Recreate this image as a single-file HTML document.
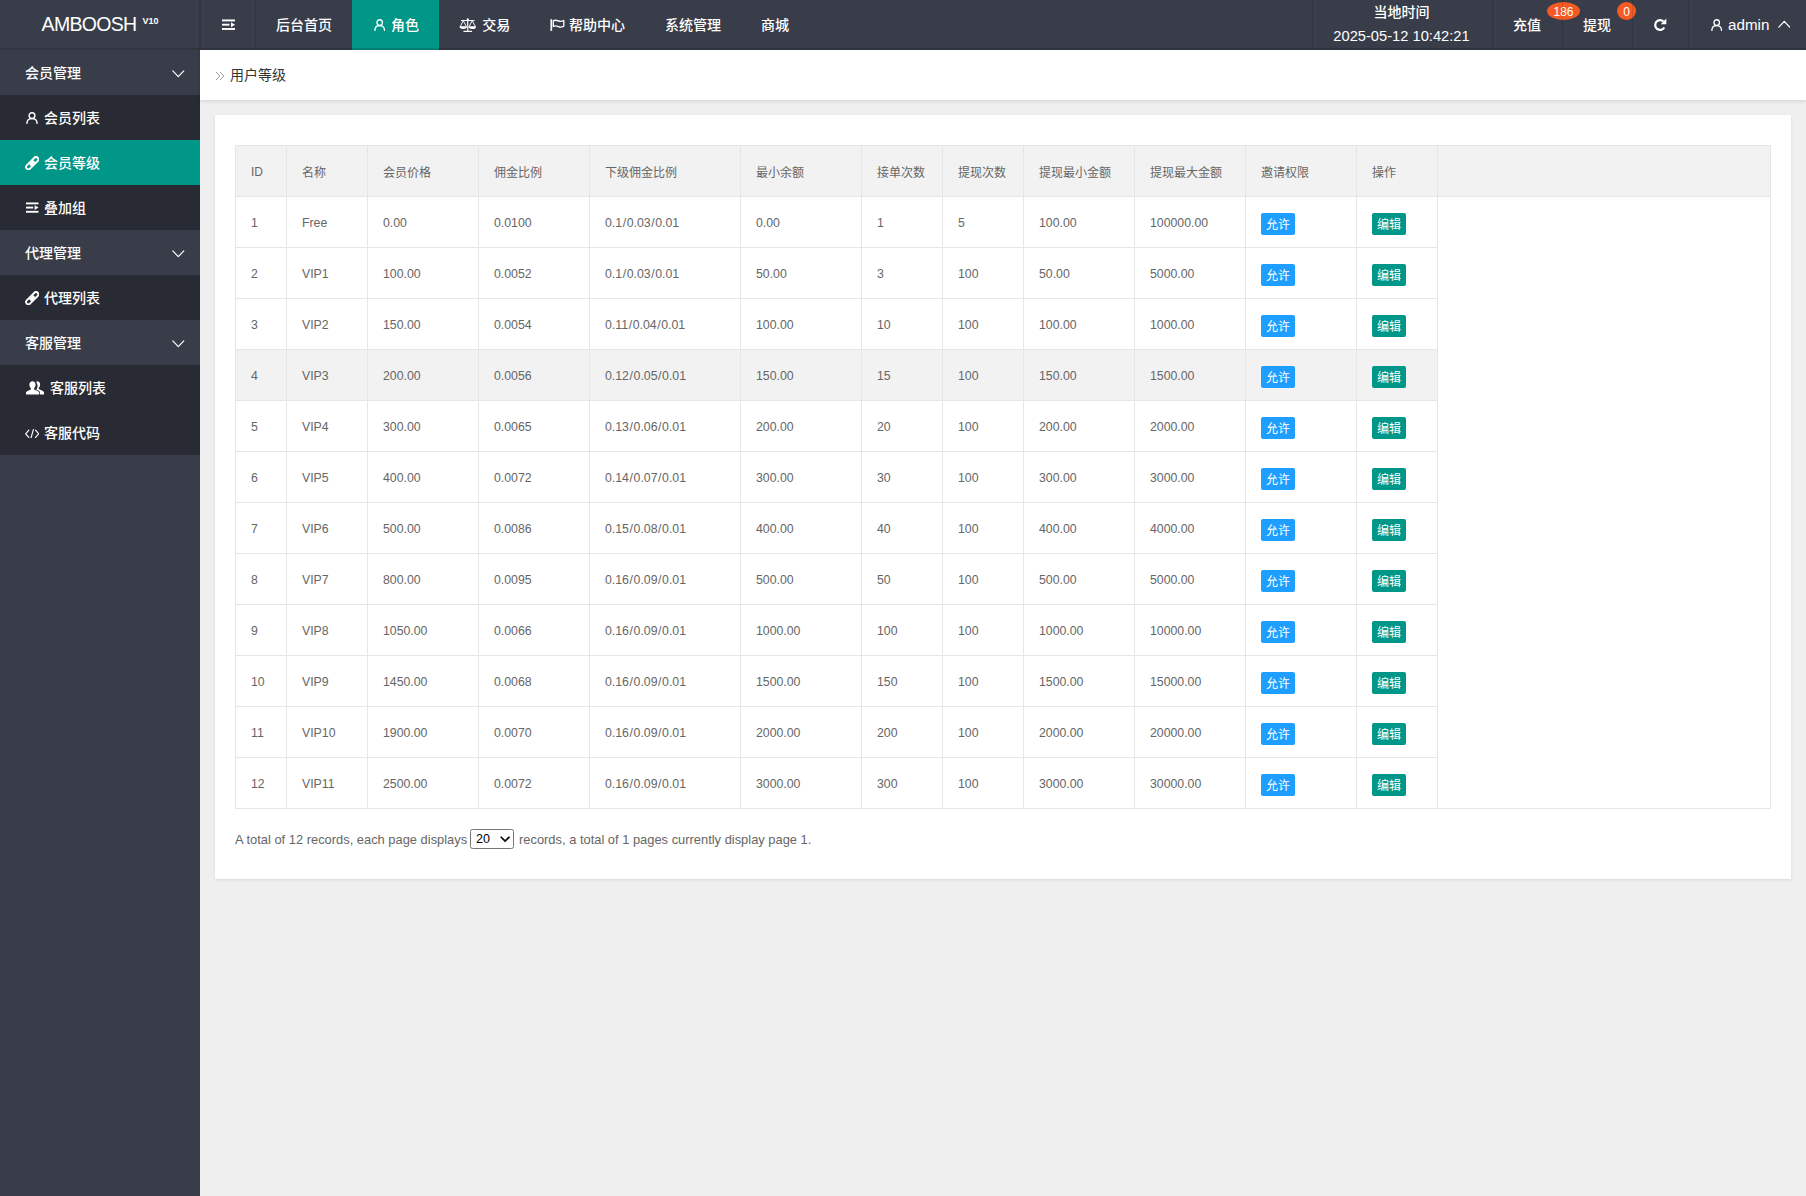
<!DOCTYPE html>
<html lang="zh-CN">
<head>
<meta charset="utf-8">
<title>用户等级</title>
<style>
*{box-sizing:border-box;margin:0;padding:0}
html,body{width:1806px;height:1196px;overflow:hidden}
body{font-family:"Liberation Sans","Noto Sans CJK SC",sans-serif;font-size:14px;color:#333;background:#efefef;position:relative}
svg{display:block}
/* header */
#hd{position:absolute;left:0;top:0;width:1806px;height:50px;background:#393d49;color:#fff}
#logo{position:absolute;left:0;top:0;width:200px;height:50px;line-height:48px;text-align:center;font-size:19.5px;letter-spacing:-.7px}
#logo sup{font-size:9px;font-weight:bold;position:relative;top:-7.500px;vertical-align:baseline;margin-left:6px;letter-spacing:0}
.nav{position:absolute;top:0;height:50px;line-height:50px;white-space:nowrap;font-size:14px;font-weight:500}
.nav .ic{position:absolute;top:0;left:0}
.nav.on{background:#009688}
.vl{position:absolute;top:0;width:1px;height:50px;background:rgba(0,0,0,.13);z-index:5}
.badge{position:absolute;top:2px;height:18px;line-height:21px;border-radius:50%;background:#f55a23;z-index:3;color:#fff;font-size:12px;text-align:center}
/* side */
#sd{position:absolute;left:0;top:50px;width:200px;height:1146px;background:#393d49;color:#fff}
.mi{position:absolute;left:0;width:200px;height:45px;line-height:47px;font-size:14px;white-space:nowrap;font-weight:500}
.mi.sub{background:#282b33}
.mi.on{background:#009688}
.mi span{position:absolute;top:0}
.mi svg{position:absolute}
/* main */
#bc{position:absolute;left:200px;top:50px;width:1606px;height:50px;background:#fff;box-shadow:0 1px 4px rgba(0,0,0,.13);line-height:50px;font-size:14px;color:#333}
#card{position:absolute;left:215px;top:115px;width:1576px;height:764px;background:#fff;box-shadow:0 1px 3px rgba(0,0,0,.10)}
#tb{position:absolute;left:20px;top:30px;width:1536px;border-collapse:collapse;table-layout:fixed;font-size:12px;color:#666}
#tb th,#tb td{border:1px solid #e6e6e6;height:51px;padding:2px 0 0 15px;text-align:left;font-weight:normal;white-space:nowrap;vertical-align:middle}
#tb th{background:#f2f2f2;height:51px;padding-top:0}
#tb td{font-size:12.3px}
#tb td i{font-style:normal;padding:0 .6px}
#tb tr.hv td{background:#f2f2f2}
#tb tr.hv td.fill{background:#fff}
.btn{display:inline-block;height:22px;line-height:25px;overflow:hidden;vertical-align:middle;padding:0 5px;border-radius:2px;color:#fff;font-size:12px;position:relative;top:1px}
.b1{background:#1e9fff}.b2{background:#009688}
#pg{position:absolute;left:20px;top:714px;height:22px;line-height:22px;font-size:12.9px;color:#666;white-space:nowrap}
#pg .sel{position:absolute;left:235px;top:0px;width:44px;height:20px;border:1px solid #767676;border-radius:2.5px;background:#fff;color:#000;font-size:12.500px;line-height:19.500px;padding-left:5px}
</style>
</head>
<body>
<div id="hd">
  <div id="logo">AMBOOSH<sup>V10</sup></div>
  <div class="vl" style="left:199px;width:2px"></div>
  <div class="nav" style="left:200px;width:55px">
    <svg class="ic" style="left:22px;top:19px" width="13" height="11.400" viewBox="0 0 13 12" preserveAspectRatio="none" fill="#fff"><rect x="0" y="0.5" width="13" height="2"/><rect x="0" y="5" width="7.5" height="2"/><rect x="0" y="9.5" width="13" height="2"/><path d="M9 3.4L13 6L9 8.6z"/></svg>
  </div>
  <div class="vl" style="left:255px"></div>
  <div class="nav" style="left:256px;width:96px;padding-left:20px">后台首页</div>
  <div class="nav on" style="left:352px;width:87px;padding-left:39px"><svg class="ic" style="left:21.500px;top:19px" width="11.400" height="12" viewBox="0 0 12 12" preserveAspectRatio="none" fill="none" stroke="#fff" stroke-width="1.4" stroke-linecap="round"><circle cx="6" cy="3.6" r="2.9"/><path d="M0.9 11.4C1 8.2 3.3 6.6 6 6.6s5 1.6 5.1 4.8"/></svg>角色</div>
  <div class="nav" style="left:439px;width:92px;padding-left:43.300px">
    <svg class="ic" style="left:19.500px;top:18px" width="17.500" height="14" viewBox="0 0 18 14" preserveAspectRatio="none" fill="none" stroke="#fff" stroke-width="0.950" stroke-linejoin="round"><path d="M2 2.500h14M9 1.500v11.500M4.600 13.300h8.800" stroke-width="1.200"/><circle cx="9" cy="1.300" r="1.100" fill="#fff" stroke="none"/><path d="M4.400 2.700L1.100 8.800h6.600z"/><path d="M13.600 2.700L10.300 8.800h6.600z"/><path d="M0.500 8.800c0.200 1.600 1.900 2.200 3.900 2.200s3.700-0.600 3.900-2.200z" fill="#fff" stroke="none"/><path d="M9.700 8.800c0.200 1.600 1.900 2.200 3.900 2.200s3.700-0.600 3.900-2.200z" fill="#fff" stroke="none"/></svg>交易</div>
  <div class="nav" style="left:531px;width:114px;padding-left:38px">
    <svg class="ic" style="left:19px;top:19px" width="15" height="13" viewBox="0 0 15 13" fill="none" stroke="#fff" stroke-width="1.3" stroke-linejoin="round"><path d="M1.3 0.200v11.700" stroke-width="1.700"/><path d="M3.3 1.8c2-1.1 3.4-0.6 5 0.1s3.300.8 5.500-0.400v5.700c-2.200 1.200-3.900 1.100-5.500 0.400s-3-1.200-5-0.100z"/></svg>帮助中心</div>
  <div class="nav" style="left:645px;width:96px;padding-left:20px">系统管理</div>
  <div class="nav" style="left:741px;width:68px;padding-left:20px">商城</div>

  <div class="vl" style="left:1312px"></div>
  <div class="nav" style="left:1313px;width:179px;text-align:center;line-height:normal">
    <div style="position:absolute;left:-1px;width:179px;top:2px;height:20px;line-height:20px;font-size:14px">当地时间</div>
    <div style="position:absolute;left:-1px;width:179px;top:26px;height:20px;line-height:20px;font-size:14.700px">2025-05-12 10:42:21</div>
  </div>
  <div class="vl" style="left:1492px"></div>
  <div class="nav" style="left:1493px;width:69px;padding-left:20px;line-height:51px">充值</div>
  <div class="badge" style="left:1547px;width:33px">186</div>
  <div class="vl" style="left:1562px"></div>
  <div class="nav" style="left:1563px;width:69px;padding-left:20px;line-height:51px">提现</div>
  <div class="badge" style="left:1617px;width:19px">0</div>
  <div class="vl" style="left:1632px"></div>
  <div class="nav" style="left:1633px;width:55px">
    <svg class="ic" style="left:20px;top:18px" width="14" height="14" viewBox="0 0 14 14" fill="none" stroke="#fff" stroke-width="2.300"><path d="M11.300 9.500A4.900 4.900 0 1 1 10.500 3.500"/><path d="M13.300 0.600v5.600h-5.600z" fill="#fff" stroke="none"/></svg>
  </div>
  <div class="vl" style="left:1688px"></div>
  <div class="nav" style="left:1689px;width:117px;padding-left:39px;font-size:15.2px;line-height:49px"><svg class="ic" style="left:21.500px;top:19px" width="11.400" height="12" viewBox="0 0 12 12" preserveAspectRatio="none" fill="none" stroke="#fff" stroke-width="1.4" stroke-linecap="round"><circle cx="6" cy="3.6" r="2.9"/><path d="M0.9 11.4C1 8.2 3.3 6.6 6 6.6s5 1.6 5.1 4.8"/></svg>admin
    <svg class="ic" style="left:88.500px;top:20.300px" width="12.500" height="8" viewBox="0 0 14 9" fill="none" stroke="#fff" stroke-width="1.4" stroke-linecap="round" stroke-linejoin="round"><path d="M0.900 8L7 1.600L13.100 8"/></svg>
  </div>
  <div style="position:absolute;left:0;top:48px;width:1806px;height:2px;background:rgba(0,0,0,.13)"></div>
</div>
<div id="sd">
<div class="mi g" style="top:0px"><span style="left:25px">会员管理</span><svg style="left:172px;top:19.600px" width="12.600" height="8.100" viewBox="0 0 14 9" fill="none" stroke="#fff" stroke-width="1.3" stroke-linecap="round" stroke-linejoin="round"><path d="M0.900 1L7 7.400L13.100 1"/></svg></div>
<div class="mi sub" style="top:45px"><svg style="left:26px;top:17px" width="12" height="12" viewBox="0 0 12 12" fill="none" stroke="#fff" stroke-width="1.4" stroke-linecap="round"><circle cx="6" cy="3.6" r="2.9"/><path d="M0.9 11.4C1 8.2 3.3 6.6 6 6.6s5 1.6 5.1 4.8"/></svg><span style="left:44px">会员列表</span></div>
<div class="mi sub on" style="top:90px"><svg style="left:24.800px;top:15.800px" width="14.400" height="14.400" viewBox="-7.200 -7.200 14.400 14.400"><g transform="rotate(-45)" fill="none" stroke="#fff" stroke-width="1.9"><rect x="-7.700" y="-2.300" width="15.400" height="4.600" rx="2.300"/><rect x="-2.900" y="-1.600" width="5.800" height="3.200" fill="#fff" stroke="none"/></g></svg><span style="left:44px">会员等级</span></div>
<div class="mi sub" style="top:135px"><svg style="left:26px;top:17.300px" width="12.500" height="11.200" viewBox="0 0 13 12" preserveAspectRatio="none" fill="#fff"><rect x="0" y="0.5" width="13" height="2"/><rect x="0" y="5" width="7.5" height="2"/><rect x="0" y="9.5" width="13" height="2"/><path d="M9 3.4L13 6L9 8.6z"/></svg><span style="left:44px">叠加组</span></div>
<div class="mi g" style="top:180px"><span style="left:25px">代理管理</span><svg style="left:172px;top:19.600px" width="12.600" height="8.100" viewBox="0 0 14 9" fill="none" stroke="#fff" stroke-width="1.3" stroke-linecap="round" stroke-linejoin="round"><path d="M0.900 1L7 7.400L13.100 1"/></svg></div>
<div class="mi sub" style="top:225px"><svg style="left:24.800px;top:15.800px" width="14.400" height="14.400" viewBox="-7.200 -7.200 14.400 14.400"><g transform="rotate(-45)" fill="none" stroke="#fff" stroke-width="1.9"><rect x="-7.700" y="-2.300" width="15.400" height="4.600" rx="2.300"/><rect x="-2.900" y="-1.600" width="5.800" height="3.200" fill="#fff" stroke="none"/></g></svg><span style="left:44px">代理列表</span></div>
<div class="mi g" style="top:270px"><span style="left:25px">客服管理</span><svg style="left:172px;top:19.600px" width="12.600" height="8.100" viewBox="0 0 14 9" fill="none" stroke="#fff" stroke-width="1.3" stroke-linecap="round" stroke-linejoin="round"><path d="M0.900 1L7 7.400L13.100 1"/></svg></div>
<div class="mi sub" style="top:315px"><svg style="left:26px;top:16px" width="18" height="14" viewBox="0 0 18 14" fill="#fff"><path d="M11.2 0.300c1.700 0 2.900 1.300 2.900 3.100 0 1.500-0.600 2.700-1.400 3.500v1.100l4.200 1.900c0.700 0.300 1.100 0.900 1.100 1.600v2.100h-4v-1.700c0-1-0.500-1.800-1.400-2.200l-2.500-1.100c0.900-1 1.400-2.300 1.400-3.700 0-1.600-0.500-2.900-1.400-3.800 0.300-0.500 0.700-0.800 1.100-0.800z"/><path d="M6.500 0.300c1.800 0 3.100 1.400 3.100 3.300 0 1.600-0.600 2.800-1.500 3.600v1.200l4 1.800c0.700 0.300 1.100 0.900 1.100 1.600v1.800h-13.200v-1.800c0-0.700 0.400-1.300 1.100-1.600l3.800-1.800v-1.200c-0.900-0.800-1.500-2-1.500-3.600 0-1.900 1.300-3.300 3.100-3.300z"/></svg><span style="left:50px">客服列表</span></div>
<div class="mi sub" style="top:360px"><svg style="left:24.800px;top:18.500px" width="14.400" height="9.600" viewBox="0 0 15 10" fill="none" stroke="#fff" stroke-width="1.2" stroke-linecap="round" stroke-linejoin="round"><path d="M4 1.200L0.700 5L4 8.800M11 1.200L14.300 5L11 8.800M8.700 0.600L6.300 9.400"/></svg><span style="left:44px">客服代码</span></div>
</div>
<div id="bc"><svg style="position:absolute;left:15px;top:21px" width="10" height="10" viewBox="0 0 10 10" fill="none" stroke="#999" stroke-width="1"><path d="M1 1l3.800 4L1 9M5 1l3.800 4L5 9"/></svg><span style="position:absolute;left:30px;top:0">用户等级</span></div>
<div id="card">
<table id="tb">
<colgroup><col style="width:51px"><col style="width:81px"><col style="width:111px"><col style="width:111px"><col style="width:151px"><col style="width:121px"><col style="width:81px"><col style="width:81px"><col style="width:111px"><col style="width:111px"><col style="width:111px"><col style="width:81px"><col></colgroup>
<thead><tr><th><span style="position:relative;top:1px">ID</span></th><th>名称</th><th>会员价格</th><th>佣金比例</th><th>下级佣金比例</th><th>最小余额</th><th>接单次数</th><th>提现次数</th><th>提现最小金额</th><th>提现最大金额</th><th>邀请权限</th><th>操作</th><th></th></tr></thead>
<tbody>
<tr><td>1</td><td>Free</td><td>0.00</td><td>0.0100</td><td>0.1<i>/</i>0.03<i>/</i>0.01</td><td>0.00</td><td>1</td><td>5</td><td>100.00</td><td>100000.00</td><td><span class="btn b1">允许</span></td><td><span class="btn b2">编辑</span></td><td class="fill" rowspan="12"></td></tr>
<tr><td>2</td><td>VIP1</td><td>100.00</td><td>0.0052</td><td>0.1<i>/</i>0.03<i>/</i>0.01</td><td>50.00</td><td>3</td><td>100</td><td>50.00</td><td>5000.00</td><td><span class="btn b1">允许</span></td><td><span class="btn b2">编辑</span></td></tr>
<tr><td>3</td><td>VIP2</td><td>150.00</td><td>0.0054</td><td>0.11<i>/</i>0.04<i>/</i>0.01</td><td>100.00</td><td>10</td><td>100</td><td>100.00</td><td>1000.00</td><td><span class="btn b1">允许</span></td><td><span class="btn b2">编辑</span></td></tr>
<tr class="hv"><td>4</td><td>VIP3</td><td>200.00</td><td>0.0056</td><td>0.12<i>/</i>0.05<i>/</i>0.01</td><td>150.00</td><td>15</td><td>100</td><td>150.00</td><td>1500.00</td><td><span class="btn b1">允许</span></td><td><span class="btn b2">编辑</span></td></tr>
<tr><td>5</td><td>VIP4</td><td>300.00</td><td>0.0065</td><td>0.13<i>/</i>0.06<i>/</i>0.01</td><td>200.00</td><td>20</td><td>100</td><td>200.00</td><td>2000.00</td><td><span class="btn b1">允许</span></td><td><span class="btn b2">编辑</span></td></tr>
<tr><td>6</td><td>VIP5</td><td>400.00</td><td>0.0072</td><td>0.14<i>/</i>0.07<i>/</i>0.01</td><td>300.00</td><td>30</td><td>100</td><td>300.00</td><td>3000.00</td><td><span class="btn b1">允许</span></td><td><span class="btn b2">编辑</span></td></tr>
<tr><td>7</td><td>VIP6</td><td>500.00</td><td>0.0086</td><td>0.15<i>/</i>0.08<i>/</i>0.01</td><td>400.00</td><td>40</td><td>100</td><td>400.00</td><td>4000.00</td><td><span class="btn b1">允许</span></td><td><span class="btn b2">编辑</span></td></tr>
<tr><td>8</td><td>VIP7</td><td>800.00</td><td>0.0095</td><td>0.16<i>/</i>0.09<i>/</i>0.01</td><td>500.00</td><td>50</td><td>100</td><td>500.00</td><td>5000.00</td><td><span class="btn b1">允许</span></td><td><span class="btn b2">编辑</span></td></tr>
<tr><td>9</td><td>VIP8</td><td>1050.00</td><td>0.0066</td><td>0.16<i>/</i>0.09<i>/</i>0.01</td><td>1000.00</td><td>100</td><td>100</td><td>1000.00</td><td>10000.00</td><td><span class="btn b1">允许</span></td><td><span class="btn b2">编辑</span></td></tr>
<tr><td>10</td><td>VIP9</td><td>1450.00</td><td>0.0068</td><td>0.16<i>/</i>0.09<i>/</i>0.01</td><td>1500.00</td><td>150</td><td>100</td><td>1500.00</td><td>15000.00</td><td><span class="btn b1">允许</span></td><td><span class="btn b2">编辑</span></td></tr>
<tr><td>11</td><td>VIP10</td><td>1900.00</td><td>0.0070</td><td>0.16<i>/</i>0.09<i>/</i>0.01</td><td>2000.00</td><td>200</td><td>100</td><td>2000.00</td><td>20000.00</td><td><span class="btn b1">允许</span></td><td><span class="btn b2">编辑</span></td></tr>
<tr><td>12</td><td>VIP11</td><td>2500.00</td><td>0.0072</td><td>0.16<i>/</i>0.09<i>/</i>0.01</td><td>3000.00</td><td>300</td><td>100</td><td>3000.00</td><td>30000.00</td><td><span class="btn b1">允许</span></td><td><span class="btn b2">编辑</span></td></tr>
</tbody>
</table>
<div id="pg"><span style="position:absolute;left:0;top:0">A total of 12 records, each page displays</span><span class="sel">20<svg style="position:absolute;left:29px;top:6px" width="10.200" height="6.500" viewBox="0 0 11 7" fill="none" stroke="#000" stroke-width="1.9"><path d="M0.800 0.800L5.500 5.500L10.200 0.800"/></svg></span><span style="position:absolute;left:284px;top:0">records, a total of 1 pages currently display page 1.</span></div>
</div>
</body>
</html>
